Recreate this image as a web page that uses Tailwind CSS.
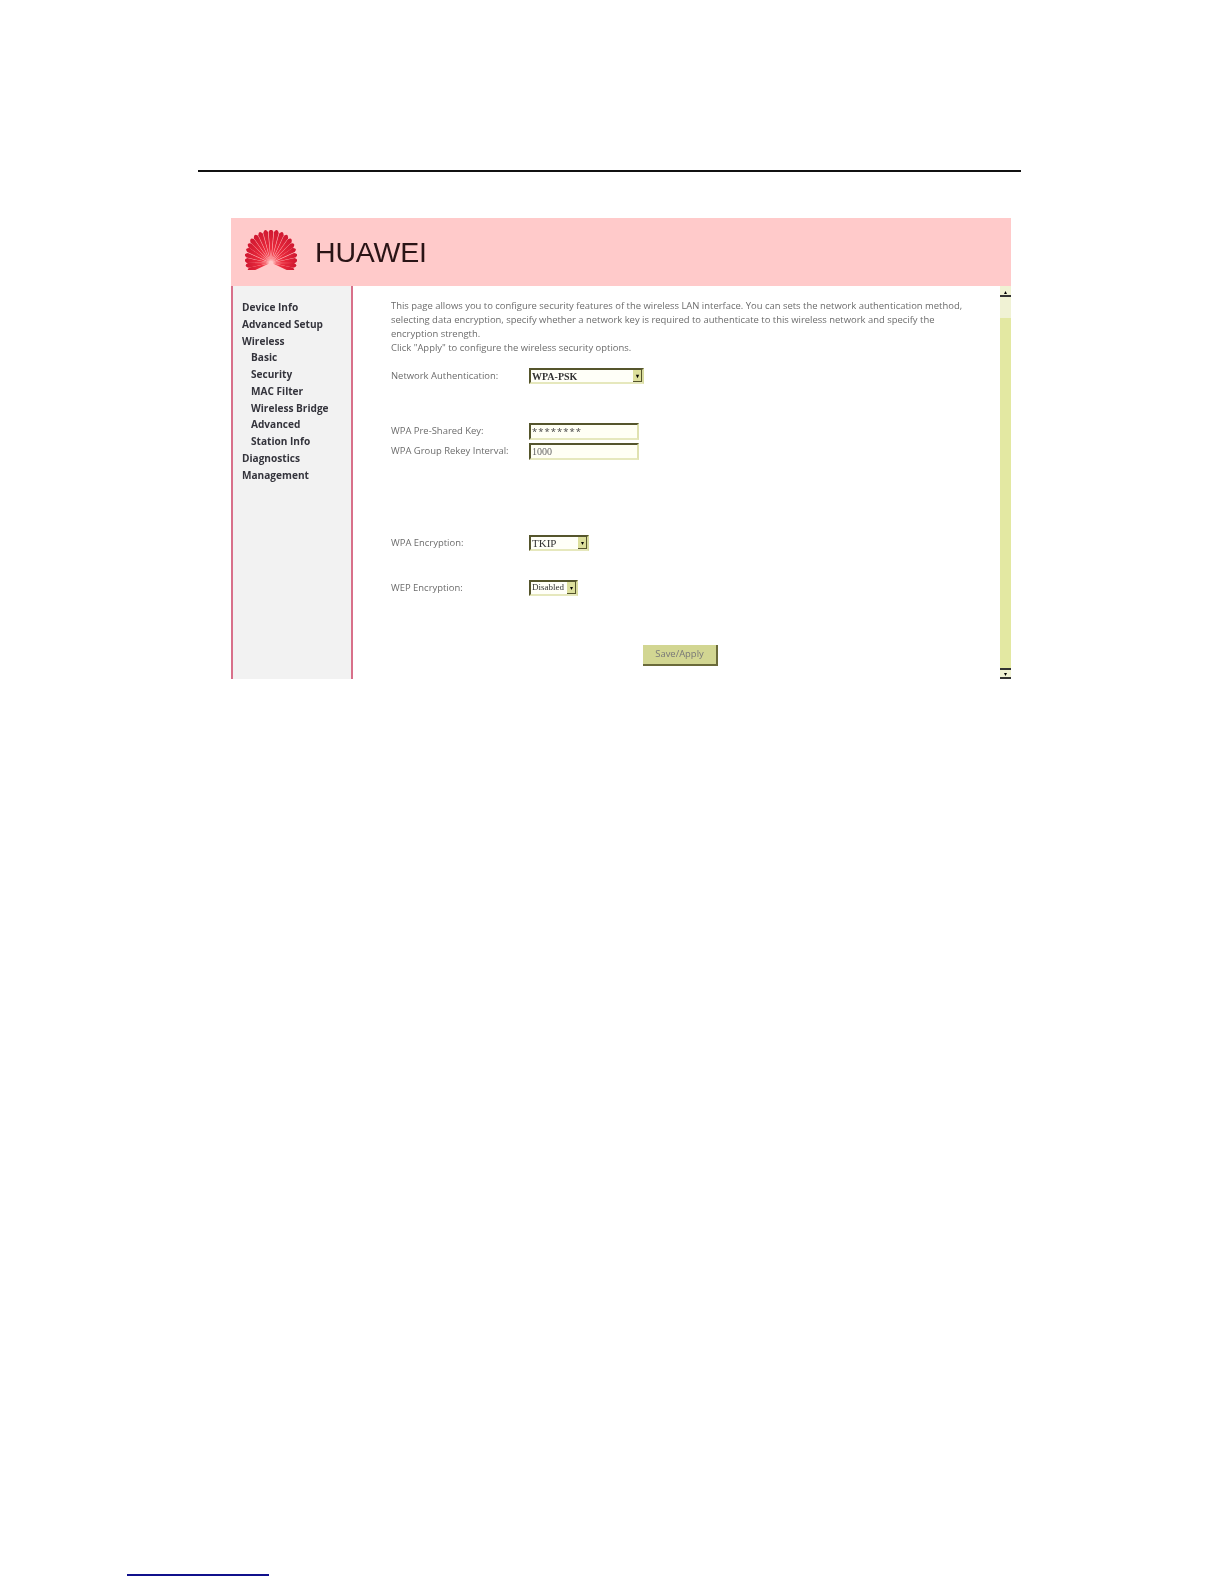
<!DOCTYPE html>
<html lang="en">
<head>
  <meta charset="UTF-8" />
  <title>HUAWEI Wireless Security</title>
  <script src="https://cdn.jsdelivr.net/npm/@tailwindcss/browser@4"></script>
</head>
<body class="bg-white font-['Open_Sans','Liberation_Sans',sans-serif]">
  <div class="h-[1584px] w-[1224px] overflow-hidden pt-[170px]">
    <div class="ml-[198px] h-[2px] w-[823px] bg-[#111]"></div>

    <div class="ml-[231px] mt-[46px] flex h-[461px] w-[780px] flex-col blur-[0.6px]">
      <!-- header -->
      <div class="flex h-[68px] shrink-0 items-center bg-[#ffcaca] pl-[14px]">
        <svg class="mb-[4px] h-[40px] w-[52px]" viewBox="0 0 52 40">
          <defs>
            <linearGradient id="petal" x1="0" y1="0" x2="0" y2="1">
              <stop offset="0" stop-color="#cf1730" />
              <stop offset="0.6" stop-color="#ea2a3c" />
              <stop offset="1" stop-color="#fb6a70" />
            </linearGradient>
          </defs>
          <g fill="url(#petal)">
            <path transform="rotate(-108 26 33)" d="M26 31 L23.6 11 Q26 6 28.4 11 Z" />
            <path transform="rotate(-96 26 33)" d="M26 31 L23.6 10 Q26 5 28.4 10 Z" />
            <path transform="rotate(-84 26 33)" d="M26 31 L23.6 9 Q26 4 28.4 9 Z" />
            <path transform="rotate(-72 26 33)" d="M26 31 L23.6 8 Q26 3 28.4 8 Z" />
            <path transform="rotate(-60 26 33)" d="M26 31 L23.6 7 Q26 2 28.4 7 Z" />
            <path transform="rotate(-50 26 33)" d="M26 31 L23.6 5.5 Q26 0.5 28.4 5.5 Z" />
            <path transform="rotate(-40 26 33)" d="M26 31 L23.6 4 Q26 -1 28.4 4 Z" />
            <path transform="rotate(-30 26 33)" d="M26 31 L23.6 3 Q26 -2 28.4 3 Z" />
            <path transform="rotate(-20 26 33)" d="M26 31 L23.6 2.5 Q26 -2.5 28.4 2.5 Z" />
            <path transform="rotate(-10 26 33)" d="M26 31 L23.6 2 Q26 -3 28.4 2 Z" />
            <path d="M26 31 L23.6 2 Q26 -3 28.4 2 Z" />
            <path transform="rotate(10 26 33)" d="M26 31 L23.6 2 Q26 -3 28.4 2 Z" />
            <path transform="rotate(20 26 33)" d="M26 31 L23.6 2.5 Q26 -2.5 28.4 2.5 Z" />
            <path transform="rotate(30 26 33)" d="M26 31 L23.6 3 Q26 -2 28.4 3 Z" />
            <path transform="rotate(40 26 33)" d="M26 31 L23.6 4 Q26 -1 28.4 4 Z" />
            <path transform="rotate(50 26 33)" d="M26 31 L23.6 5.5 Q26 0.5 28.4 5.5 Z" />
            <path transform="rotate(60 26 33)" d="M26 31 L23.6 7 Q26 2 28.4 7 Z" />
            <path transform="rotate(72 26 33)" d="M26 31 L23.6 8 Q26 3 28.4 8 Z" />
            <path transform="rotate(84 26 33)" d="M26 31 L23.6 9 Q26 4 28.4 9 Z" />
            <path transform="rotate(96 26 33)" d="M26 31 L23.6 10 Q26 5 28.4 10 Z" />
            <path transform="rotate(108 26 33)" d="M26 31 L23.6 11 Q26 6 28.4 11 Z" />
          </g>
        </svg>
        <span class="ml-[18px] font-['Liberation_Sans',sans-serif] text-[28.5px] leading-none tracking-[-0.2px] text-[#2a1416]">HUAWEI</span>
      </div>

      <div class="flex min-h-0 flex-1">
        <!-- side menu -->
        <nav class="w-[122px] shrink-0 border-x-2 border-[#d8708a] bg-[#f2f2f2] pl-[9px] pt-[13px] text-[10.1px] leading-[16.76px] font-bold text-[#34343c]">
          <div>Device Info</div>
          <div>Advanced Setup</div>
          <div>Wireless</div>
          <div class="pl-[9px]">Basic</div>
          <div class="pl-[9px]">Security</div>
          <div class="pl-[9px]">MAC Filter</div>
          <div class="pl-[9px]">Wireless Bridge</div>
          <div class="pl-[9px]">Advanced</div>
          <div class="pl-[9px]">Station Info</div>
          <div>Diagnostics</div>
          <div>Management</div>
        </nav>

        <!-- main frame -->
        <main class="min-w-0 flex-1 pl-[38px] pt-[13px] text-[9.45px] text-[#6c6c6c]">
          <p class="whitespace-nowrap leading-[13.9px]">
            This page allows you to configure security features of the wireless LAN interface. You can sets the network authentication method,<br />
            selecting data encryption, specify whether a network key is required to authenticate to this wireless network and specify the<br />
            encryption strength.<br />
            Click "Apply" to configure the wireless security options.
          </p>

          <div class="mt-[13.4px] flex h-[16px] items-center">
            <span class="w-[138px]">Network Authentication:</span>
            <div class="flex h-[16px] w-[115px] items-center justify-between border-2 border-[#55552c] border-r-[#d9dca0] border-b-[#e6e8bd] bg-[#fffff8] pl-[1px] font-['Liberation_Serif',serif] text-[10px] font-bold text-[#333]">
              WPA-PSK
              <span class="flex h-full w-[9px] items-center justify-center border-r border-b border-[#55552c] bg-[#dcdf9c] text-[6px] leading-none text-black">▾</span>
            </div>
          </div>

          <div class="mt-[39px] flex h-[17px] items-center">
            <span class="w-[138px]">WPA Pre-Shared Key:</span>
            <div class="flex h-[17px] w-[110px] items-center border-2 border-[#55552c] border-r-[#e0e2b0] border-b-[#e6e8bd] bg-[#fffff4] pl-[1px] text-[9.5px] leading-none tracking-[1px] text-[#444]">********</div>
          </div>
          <div class="mt-[3px] flex h-[17px] items-center">
            <span class="w-[138px]">WPA Group Rekey Interval:</span>
            <div class="flex h-[17px] w-[110px] items-center border-2 border-[#55552c] border-r-[#e0e2b0] border-b-[#e6e8bd] bg-[#fffff4] pl-[1px] font-['Liberation_Serif',serif] text-[10px] text-[#666]">1000</div>
          </div>

          <div class="mt-[75px] flex h-[16px] items-center">
            <span class="w-[138px]">WPA Encryption:</span>
            <div class="flex h-[16px] w-[60px] items-center justify-between border-2 border-[#55552c] border-r-[#d9dca0] border-b-[#e6e8bd] bg-[#fffff8] pl-[1px] font-['Liberation_Serif',serif] text-[11px] text-[#333]">
              TKIP
              <span class="flex h-full w-[9px] items-center justify-center border-r border-b border-[#55552c] bg-[#dcdf9c] text-[6px] leading-none text-black">▾</span>
            </div>
          </div>

          <div class="mt-[29px] flex h-[16px] items-center">
            <span class="w-[138px]">WEP Encryption:</span>
            <div class="flex h-[16px] w-[49px] items-center justify-between border-2 border-[#55552c] border-r-[#d9dca0] border-b-[#e6e8bd] bg-[#fffff8] pl-[1px] font-['Liberation_Serif',serif] text-[9px] text-[#333]">
              Disabled
              <span class="flex h-full w-[9px] items-center justify-center border-r border-b border-[#55552c] bg-[#dcdf9c] text-[6px] leading-none text-black">▾</span>
            </div>
          </div>

          <div class="ml-[252px] mt-[49px] flex h-[21px] w-[75px] items-center justify-center border-r-2 border-b-2 border-[#6a6a3a] bg-[#d2d692] text-[9.45px] text-[#777]">Save/Apply</div>
        </main>

        <!-- scrollbar -->
        <div class="flex w-[11px] shrink-0 flex-col bg-[#f0f2d4]">
          <div class="mt-[3px] flex h-[8px] items-center justify-center border-b-2 border-[#333] text-[6px] leading-none text-black">▴</div>
          <div class="mt-[21px] flex-1 bg-[#e3e8a2]"></div>
          <div class="flex h-[11px] items-center justify-center border-y-2 border-[#333] text-[6px] leading-none text-black">▾</div>
        </div>
      </div>
    </div>

    <div class="ml-[127px] mt-[895px] h-[2px] w-[142px] bg-[#10108c]"></div>
  </div>
</body>
</html>
